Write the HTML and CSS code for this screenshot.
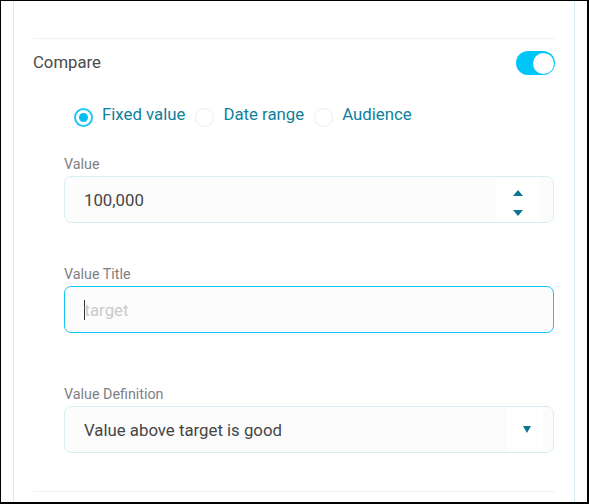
FILE: index.html
```html
<!DOCTYPE html>
<html>
<head>
<meta charset="utf-8">
<link rel="stylesheet" href="styles.css">
</head>
<body>
<div class="frame">
  <div class="panel">
    <div class="divider top"></div>
    <div class="compare-row">
      <span class="compare-label">Compare</span>
      <div class="toggle"><div class="knob"></div></div>
    </div>
    <div class="radio-row">
      <div class="radio-item"><span class="radio checked"><span class="dot"></span></span><span class="radio-text">Fixed value</span></div>
      <div class="radio-item"><span class="radio"></span><span class="radio-text">Date range</span></div>
      <div class="radio-item"><span class="radio"></span><span class="radio-text">Audience</span></div>
    </div>
    <div class="field first">
      <div class="field-label">Value</div>
      <div class="box">
        <span class="box-text">100,000</span>
        <div class="spinner">
          <span class="arrow-up"></span>
          <span class="arrow-down"></span>
        </div>
      </div>
    </div>
    <div class="field second">
      <div class="field-label">Value Title</div>
      <div class="box focused">
        <span class="caret"></span><span class="placeholder">target</span>
      </div>
    </div>
    <div class="field third">
      <div class="field-label">Value Definition</div>
      <div class="box">
        <span class="box-text">Value above target is good</span>
        <div class="select-btn"><span class="arrow-select"></span></div>
      </div>
    </div>
    <div class="divider bottom"></div>
  </div>
</div>
</body>
</html>
```

FILE: styles.css
```css
html, body {
  margin: 0;
  padding: 0;
  background: #fff;
}
body {
  font-family: Roboto, "Liberation Sans", sans-serif;
}
.frame {
  width: 589px;
  height: 504px;
  box-sizing: border-box;
  border-style: solid;
  border-color: #000;
  border-width: 1px 2px 2px 1px;
  overflow: hidden;
}
.panel {
  margin-left: 12px;
  width: 562px;
  height: 100%;
  box-sizing: border-box;
  border-left: 1px solid #dfe9e9;
  border-right: 1px solid #d2edf2;
  padding: 0 19px;
  display: flex;
  flex-direction: column;
}
.divider {
  height: 1px;
  background: #eef2f2;
  flex-shrink: 0;
}
.divider.top { margin-top: 37px; }
.divider.bottom { margin-top: 38px; }
.compare-row {
  margin-top: 12px;
  height: 24px;
  display: flex;
  align-items: center;
  justify-content: space-between;
}
.compare-label {
  font-size: 16.7px;
  color: #4a4a4a;
  line-height: 24px;
}
.toggle {
  width: 39px;
  height: 24px;
  border-radius: 12px;
  background: #00c5f8;
  box-sizing: border-box;
  padding: 1.5px 1.5px;
  display: flex;
  justify-content: flex-end;
}
.knob {
  width: 21px;
  height: 21px;
  border-radius: 50%;
  background: #fff;
}
.radio-row {
  margin-top: 29px;
  margin-left: 41px;
  height: 20px;
  display: flex;
  align-items: center;
  gap: 10px;
}
.radio-item {
  display: flex;
  align-items: center;
  gap: 9px;
}
.radio {
  width: 19px;
  height: 19px;
  box-sizing: border-box;
  border-radius: 50%;
  border: 1.5px solid #e3f1f5;
  margin-top: 6px;
  display: flex;
  align-items: center;
  justify-content: center;
}
.radio.checked {
  border: 2px solid #22c8f2;
}
.dot {
  width: 9px;
  height: 9px;
  border-radius: 50%;
  background: #00bdf0;
}
.radio-text {
  font-size: 16.8px;
  color: #0f7f9c;
  line-height: 20px;
}
.field {
  margin-left: 31px;
  margin-right: 1px;
}
.field.first { margin-top: 32px; }
.field.second { margin-top: 43px; }
.field.third { margin-top: 53px; }
.field-label {
  font-size: 14.3px;
  line-height: 16px;
  color: #7f7f7f;
  margin-bottom: 4px;
}
.box {
  height: 47px;
  box-sizing: border-box;
  border: 1px solid #d9eef2;
  border-radius: 7px;
  background: #fcfcfc;
  padding-left: 19px;
  display: flex;
  align-items: center;
}
.box.focused {
  border: 1.5px solid #12c6f4;
  padding-left: 18.5px;
}
.box-text {
  font-size: 16.8px;
  color: #454545;
  flex: 1;
}
.placeholder {
  font-size: 16.8px;
  color: #cacaca;
}
.caret {
  width: 1px;
  height: 20px;
  background: #333;
}
.spinner {
  width: 44px;
  height: 44px;
  box-sizing: border-box;
  padding-top: 7px;
  margin-right: 13px;
  background: #fff;
  display: flex;
  flex-direction: column;
  align-items: center;
  justify-content: center;
  gap: 14px;
}
.arrow-up {
  width: 0;
  height: 0;
  border-left: 5px solid transparent;
  border-right: 5px solid transparent;
  border-bottom: 6px solid #0c7592;
}
.arrow-down {
  width: 0;
  height: 0;
  border-left: 5px solid transparent;
  border-right: 5px solid transparent;
  border-top: 6px solid #0c7592;
}
.select-btn {
  width: 36px;
  height: 44px;
  margin-right: 10px;
  background: #fff;
  display: flex;
  align-items: center;
  justify-content: center;
}
.arrow-select {
  width: 0;
  height: 0;
  border-left: 4.5px solid transparent;
  border-right: 4.5px solid transparent;
  border-top: 7px solid #0c7592;
  margin-left: 4px;
}
```
